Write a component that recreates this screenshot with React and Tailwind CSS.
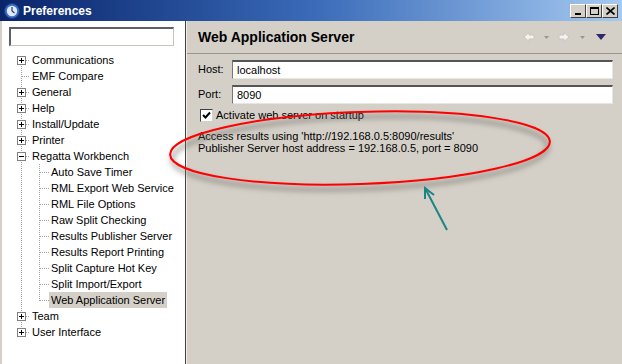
import React from "react";

const topItems = [
  { label: "Communications", box: "+" },
  { label: "EMF Compare" },
  { label: "General", box: "+" },
  { label: "Help", box: "+" },
  { label: "Install/Update", box: "+" },
  { label: "Printer", box: "+" },
  {
    label: "Regatta Workbench",
    box: "-",
    children: [
      "Auto Save Timer",
      "RML Export Web Service",
      "RML File Options",
      "Raw Split Checking",
      "Results Publisher Server",
      "Results Report Printing",
      "Split Capture Hot Key",
      "Split Import/Export",
      "Web Application Server",
    ],
  },
  { label: "Team", box: "+" },
  { label: "User Interface", box: "+" },
];

// one cell of the tree connectors
const Gutter = ({ vert, horiz, box, w = 18 }) => (
  <svg width={w} height="16" className="shrink-0" shapeRendering="crispEdges">
    {vert === "full" && (
      <line x1="9.5" y1="0" x2="9.5" y2="16" stroke="#a0a0a0" strokeDasharray="1 1" />
    )}
    {vert === "top" && (
      <line x1="9.5" y1="0" x2="9.5" y2="9" stroke="#a0a0a0" strokeDasharray="1 1" />
    )}
    {vert === "bottom" && (
      <line x1="9.5" y1="8" x2="9.5" y2="16" stroke="#a0a0a0" strokeDasharray="1 1" />
    )}
    {horiz && (
      <line x1="10" y1="8.5" x2={w} y2="8.5" stroke="#a0a0a0" strokeDasharray="1 1" />
    )}
    {box && (
      <g>
        <rect x="5.5" y="4.5" width="8" height="8" fill="#fff" stroke="#808080" />
        <line x1="7" y1="8.5" x2="12" y2="8.5" stroke="#000" />
        {box === "+" && <line x1="9.5" y1="6" x2="9.5" y2="11" stroke="#000" />}
      </g>
    )}
  </svg>
);

const Label = ({ text, selected }) => (
  <span className={`px-[2px] h-4 leading-4 whitespace-nowrap ${selected ? "bg-[#d4d0c8]" : ""}`}>
    {text}
  </span>
);

const Tree = () => {
  const rows = [];
  topItems.forEach((item, i) => {
    const first = i === 0;
    const last = i === topItems.length - 1;
    rows.push(
      <div key={item.label} className="flex h-4 items-center">
        <Gutter vert={first ? "bottom" : last ? "top" : "full"} horiz box={item.box} />
        <Label text={item.label} />
      </div>
    );
    (item.children || []).forEach((child, j) => {
      const lastChild = j === item.children.length - 1;
      rows.push(
        <div key={child} className="flex h-4 items-center">
          <Gutter vert="full" />
          <Gutter vert={lastChild ? "top" : "full"} horiz w={19} />
          <Label text={child} selected={lastChild} />
        </div>
      );
    });
  });
  return <div className="mt-[6px] ml-[10px] flex flex-col">{rows}</div>;
};

const Field = ({ label, value }) => (
  <div className="flex items-center h-[19px]">
    <span className="w-[34px]">{label}</span>
    <div className="w-[381px] h-[19px] bg-white border-t-2 border-l border-t-[#555] border-l-[#777] border-b border-r border-b-[#e8e6e0] border-r-[#e8e6e0] flex items-center pl-[4px]">
      {value}
    </div>
  </div>
);

const TitleIcon = () => (
  <svg width="16" height="16" viewBox="0 0 16 16">
    <circle cx="8" cy="8" r="7.5" fill="#3a6ec8" stroke="#1c3c80" />
    <circle cx="8" cy="8" r="5.2" fill="#dfe9f8" />
    <line x1="8" y1="8" x2="8" y2="4" stroke="#1c3c80" strokeWidth="1.2" />
    <line x1="8" y1="8" x2="10.5" y2="10" stroke="#1c3c80" strokeWidth="1.2" />
  </svg>
);

const NavIcons = () => (
  <svg width="86" height="12" viewBox="0 0 86 12">
    <path d="M1 6 L6 1.5 V4 H11 V8 H6 V10.5 Z" fill="#f4f3ef" stroke="#c8c5bd" />
    <path d="M21 5 H26 L23.5 8 Z" fill="#9a968e" />
    <path d="M46 6 L41 1.5 V4 H36 V8 H41 V10.5 Z" fill="#f4f3ef" stroke="#c8c5bd" />
    <path d="M57 5 H62 L59.5 8 Z" fill="#9a968e" />
    <path d="M73 3 H83 L78 9 Z" fill="#2c2a6a" />
  </svg>
);

export default function App() {
  return (
    <div className="relative w-[622px] h-[364px] overflow-hidden bg-[#d4d0c8] flex flex-col text-[11px] text-black font-['Liberation_Sans',Arial,sans-serif]">
      {/* title bar */}
      <div className="h-[21px] shrink-0 flex items-center pl-[4px] pr-[4px] bg-linear-to-r from-[#0a246a] via-[#3a6ab8] to-[#a6caf0]">
        <TitleIcon />
        <span className="ml-[3px] text-white font-bold text-[12px]">Preferences</span>
        <div className="ml-auto flex gap-0">
          {["min", "max", "close"].map((b) => (
            <div
              key={b}
              className="w-[16px] h-[14px] bg-[#d4d0c8] border border-t-white border-l-white border-b-[#404040] border-r-[#404040] flex items-center justify-center"
            >
              {b === "min" && <div className="w-[6px] h-[2px] bg-black mt-[6px]" />}
              {b === "max" && <div className="w-[9px] h-[8px] border border-black border-t-2" />}
              {b === "close" && (
                <svg width="9" height="8" viewBox="0 0 9 8">
                  <path d="M0.5 0.5 L8.5 7.5 M8.5 0.5 L0.5 7.5" stroke="#000" strokeWidth="1.6" />
                </svg>
              )}
            </div>
          ))}
        </div>
      </div>

      <div className="flex flex-1 min-h-0">
        {/* left pane */}
        <div className="ml-[2px] w-[184px] shrink-0 bg-white border-r border-[#404040] flex flex-col">
          <div className="ml-[7px] mt-[6px] w-[165px] h-[19px] bg-white border-t-2 border-l-2 border-t-[#606060] border-l-[#606060] border-b border-r border-b-[#c8c4bc] border-r-[#c8c4bc]" />
          <Tree />
        </div>

        {/* right pane */}
        <div className="flex-1 border-l border-[#f0efe9] flex flex-col">
          <div className="h-[33px] shrink-0 flex items-center pl-[11px] pr-[13px] border-b border-[#9a968e]">
            <span className="font-bold text-[14px]">Web Application Server</span>
            <div className="ml-auto">
              <NavIcons />
            </div>
          </div>
          <div className="pl-[11px] pt-[6px] flex flex-col">
            <Field label="Host:" value="localhost" />
            <div className="mt-[6px]">
              <Field label="Port:" value="8090" />
            </div>
            <div className="mt-[5px] flex items-center h-[13px]">
              <div className="ml-[2px] w-[13px] h-[13px] bg-white border border-t-[#404040] border-l-[#404040] border-b-[#d4d0c8] border-r-[#d4d0c8] flex items-center justify-center">
                <svg width="9" height="9" viewBox="0 0 9 9">
                  <path d="M1 4 L3.5 6.5 L8 1.5" fill="none" stroke="#000" strokeWidth="2" />
                </svg>
              </div>
              <span className="ml-[3px]">Activate web server on startup</span>
            </div>
            <div className="mt-[8px] leading-[12px]">
              <div>Access results using 'http://192.168.0.5:8090/results'</div>
              <div>Publisher Server host address = 192.168.0.5, port = 8090</div>
            </div>
          </div>
        </div>
      </div>

      {/* annotation: red ellipse and arrow */}
      <svg className="absolute inset-0 pointer-events-none" width="622" height="364">
        <defs>
          <filter id="soft" x="-20%" y="-50%" width="140%" height="200%">
            <feGaussianBlur stdDeviation="2.5" />
          </filter>
        </defs>
        <ellipse
          cx="360"
          cy="153"
          rx="188"
          ry="36"
          fill="none"
          stroke="#6f6c66"
          strokeOpacity="0.45"
          strokeWidth="5"
          filter="url(#soft)"
          transform="rotate(-2 360 153)"
        />
        <ellipse
          cx="360"
          cy="148"
          rx="190"
          ry="36"
          fill="none"
          stroke="#ff0000"
          strokeWidth="2"
          transform="rotate(-2 360 148)"
        />
        <path d="M447 230 L425 188" stroke="#1b8585" strokeWidth="2" />
        <path d="M425 199 L425 188 L434 195" fill="none" stroke="#1b8585" strokeWidth="2" />
      </svg>
    </div>
  );
}
